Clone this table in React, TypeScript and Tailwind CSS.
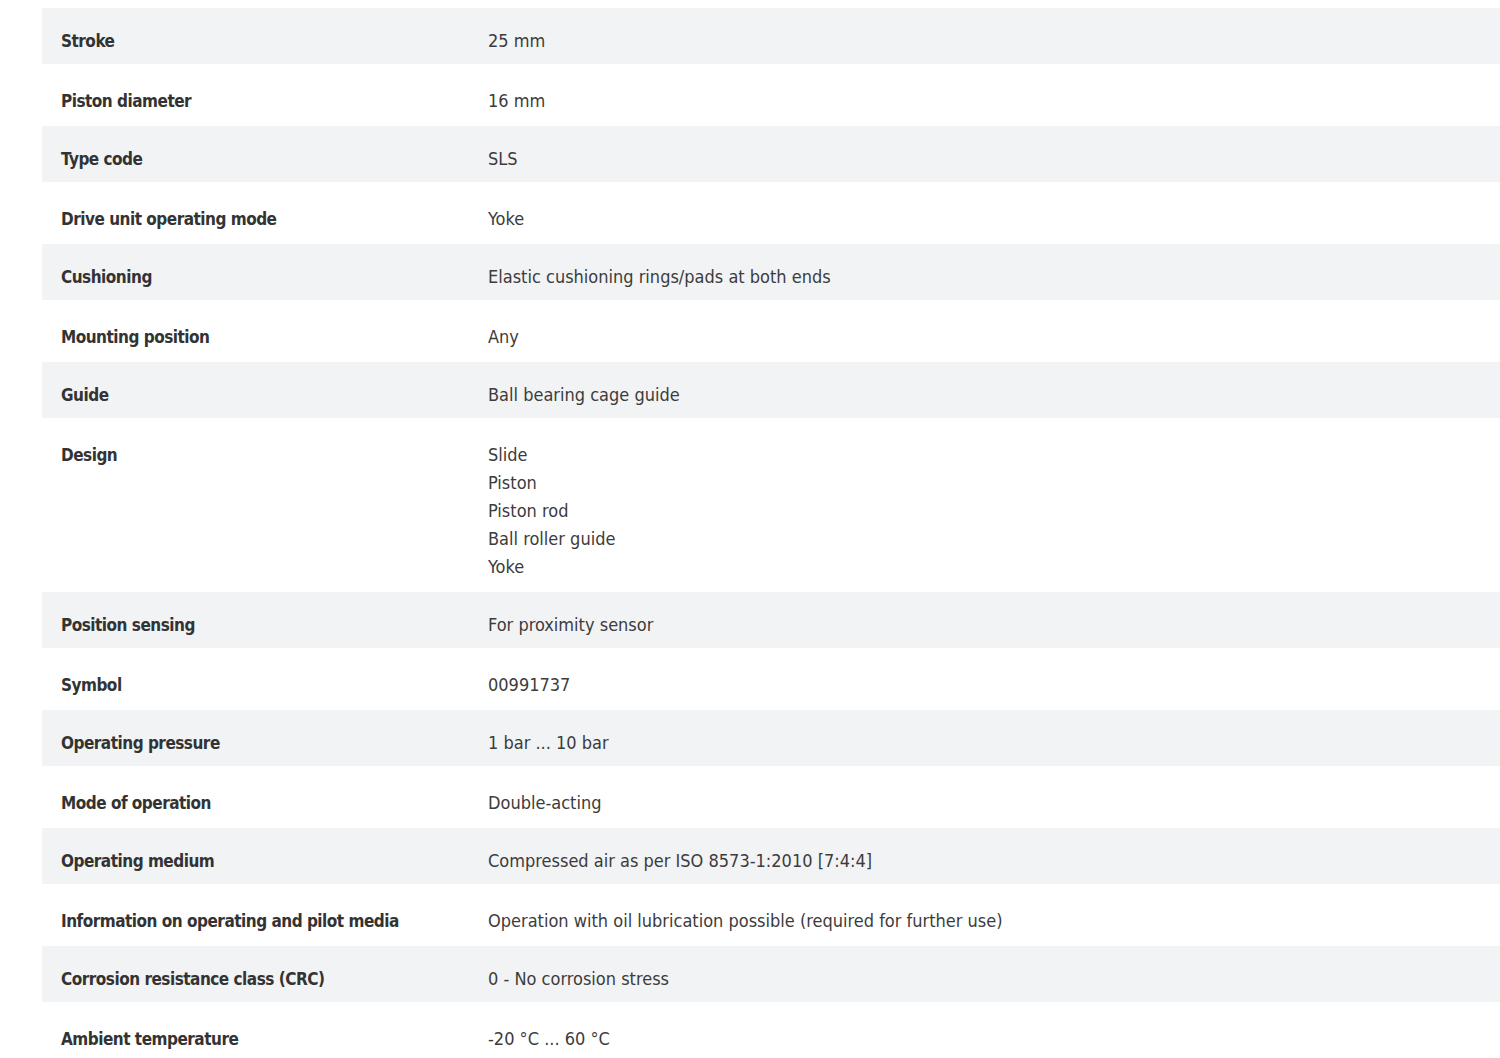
const ROWS: { label: string; value: string[] }[] = [
  { label: 'Stroke', value: ['25 mm'] },
  { label: 'Piston diameter', value: ['16 mm'] },
  { label: 'Type code', value: ['SLS'] },
  { label: 'Drive unit operating mode', value: ['Yoke'] },
  { label: 'Cushioning', value: ['Elastic cushioning rings/pads at both ends'] },
  { label: 'Mounting position', value: ['Any'] },
  { label: 'Guide', value: ['Ball bearing cage guide'] },
  { label: 'Design', value: ['Slide', 'Piston', 'Piston rod', 'Ball roller guide', 'Yoke'] },
  { label: 'Position sensing', value: ['For proximity sensor'] },
  { label: 'Symbol', value: ['00991737'] },
  { label: 'Operating pressure', value: ['1 bar ... 10 bar'] },
  { label: 'Mode of operation', value: ['Double-acting'] },
  { label: 'Operating medium', value: ['Compressed air as per ISO 8573-1:2010 [7:4:4]'] },
  { label: 'Information on operating and pilot media', value: ['Operation with oil lubrication possible (required for further use)'] },
  { label: 'Corrosion resistance class (CRC)', value: ['0 - No corrosion stress'] },
  { label: 'Ambient temperature', value: ['-20 °C ... 60 °C'] },
];

export default function App() {
  return (
    <div
      className="min-h-screen overflow-hidden bg-white pl-[42px] pt-2"
      style={{ fontFamily: '"DejaVu Sans Condensed", Roboto, sans-serif' }}
    >
      {/* Technical data table */}
      <div className="flex flex-col">
        {ROWS.map((row, i) => {
          const striped = i % 2 === 0;
          return (
            <div
              key={row.label}
              className={
                striped
                  ? 'flex h-[56px] bg-[#f2f3f5] pt-[19px]'
                  : 'flex min-h-[62px] bg-white pt-[23px] pb-[11px]'
              }
            >
              <div className="w-[427px] shrink-0 pl-[19px] text-[17px] leading-[28px] font-bold tracking-[-0.5px] text-[#333333]">
                {row.label}
              </div>
              <div className="flex flex-col pl-[19px] text-[18px] leading-[28px] text-[#3c3c3c]">
                {row.value.map((v) => (
                  <span key={v}>{v}</span>
                ))}
              </div>
            </div>
          );
        })}
      </div>
    </div>
  );
}
